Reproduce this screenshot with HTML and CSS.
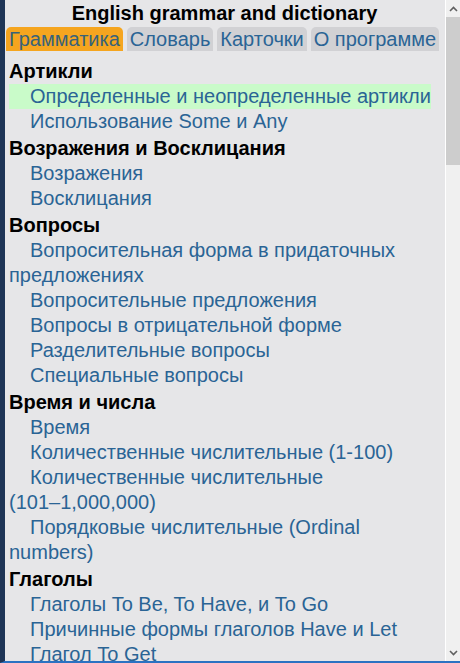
FILE: index.html
```html
<!DOCTYPE html>
<html lang="ru">
<head>
<meta charset="utf-8">
<link rel="stylesheet" href="styles.css">
</head>
<body>
<div class="frame">
  <div class="content">
    <h1 class="title">English grammar and dictionary</h1>
    <div class="tabs">
      <span class="tab active">Грамматика</span>
      <span class="tab">Словарь</span>
      <span class="tab">Карточки</span>
      <span class="tab">О программе</span>
    </div>
    <div class="list">
      <div class="sec">Артикли</div>
      <a class="item hl">Определенные и неопределенные артикли</a>
      <a class="item">Использование Some и Any</a>
      <div class="sec">Возражения и Восклицания</div>
      <a class="item">Возражения</a>
      <a class="item">Восклицания</a>
      <div class="sec">Вопросы</div>
      <a class="item">Вопросительная форма в придаточных предложениях</a>
      <a class="item">Вопросительные предложения</a>
      <a class="item">Вопросы в отрицательной форме</a>
      <a class="item">Разделительные вопросы</a>
      <a class="item">Специальные вопросы</a>
      <div class="sec">Время и числа</div>
      <a class="item">Время</a>
      <a class="item">Количественные числительные (1-100)</a>
      <a class="item">Количественные числительные <span class="nw">(101–1,000,000)</span></a>
      <a class="item">Порядковые числительные (Ordinal numbers)</a>
      <div class="sec">Глаголы</div>
      <a class="item">Глаголы To Be, To Have, и To Go</a>
      <a class="item">Причинные формы глаголов Have и Let</a>
      <a class="item">Глагол To Get</a>
    </div>
  </div>
  <div class="scrollbar">
    <div class="arrow up"><svg width="9" height="6" viewBox="0 0 9 6"><path d="M1 5 L4.5 1.5 L8 5" fill="none" stroke="#606060" stroke-width="1.6"/></svg></div>
    <div class="thumb"></div>
    <div class="track"></div>
    <div class="arrow down"><svg width="9" height="6" viewBox="0 0 9 6"><path d="M1 1 L4.5 4.5 L8 1" fill="none" stroke="#606060" stroke-width="1.6"/></svg></div>
  </div>
</div>
</body>
</html>
```
FILE: styles.css
```css
html, body {
  margin: 0;
  padding: 0;
  height: 100%;
  overflow: hidden;
}
body {
  font-family: "Liberation Sans", Arial, sans-serif;
}
.frame {
  display: flex;
  height: 663px;
  box-sizing: border-box;
  border-left: 5px solid #1e3556;
  border-bottom: 2px solid #2b72c2;
  background: #e6e6e8;
}
.content {
  flex: 1;
  overflow: hidden;
  padding-left: 1px;
  padding-right: 2px;
  box-sizing: border-box;
}
.title {
  margin: 0;
  font-size: 20px;
  line-height: 22px;
  font-weight: bold;
  text-align: center;
  color: #000;
  padding-top: 2px;
}
.tabs {
  display: flex;
  gap: 4px;
  margin-top: 3px;
}
.tab {
  font-size: 20px;
  line-height: 24px;
  padding: 0 3px;
  background: #d1d1d4;
  color: #2a6495;
  border-radius: 5px 5px 0 0;
}
.tab.active {
  background: #f5a51f;
  color: #37627a;
}
.list {
  padding: 6px 0 0 3px;
}
.sec {
  font-size: 20px;
  line-height: 25px;
  font-weight: bold;
  color: #000;
  padding-top: 2px;
}
.item {
  display: block;
  width: fit-content;
  font-size: 20px;
  line-height: 25px;
  text-indent: 21px;
  color: #2a6495;
  text-decoration: none;
}
.nw {
  white-space: nowrap;
}
.item.hl {
  background: #c9fbc9;
}
.scrollbar {
  width: 14px;
  border-left: 1px solid #ffffff;
  background: #f0f0f0;
  display: flex;
  flex-direction: column;
}
.arrow {
  height: 17px;
  display: flex;
  align-items: center;
  justify-content: center;
}
.thumb {
  height: 148px;
  background: #cdcdcd;
}
.track {
  flex: 1;
}
```
